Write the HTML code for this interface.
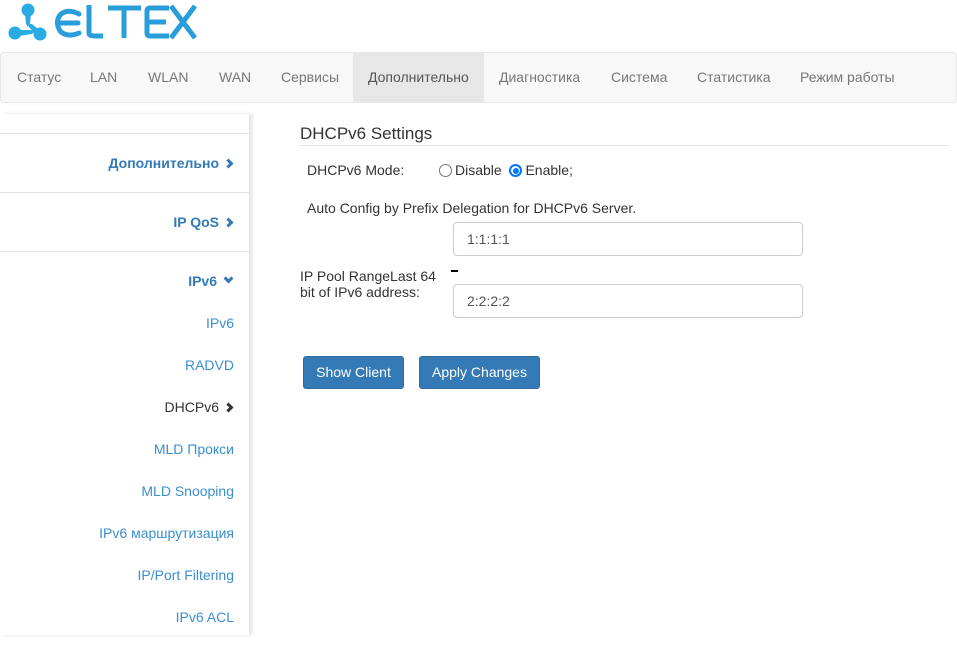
<!DOCTYPE html>
<html><head><meta charset="utf-8"><style>
*{box-sizing:border-box;margin:0;padding:0}
body{width:957px;height:651px;background:#fff;font-family:"Liberation Sans",Arial,sans-serif;font-size:14px;color:#333;position:relative;overflow:hidden}
.nav{position:absolute;left:0;top:52px;width:957px;height:51px;background:#f8f8f8;border:1px solid #e7e7e7;border-radius:4px}
.nav span{position:absolute;top:0;height:49px;line-height:49px;color:#777;font-size:14px}
.nav .act{background:#e7e7e7;color:#555;padding:0 15px}
.side{position:absolute;left:0;top:114px;width:249px;height:521px;background:#fff;box-shadow:3px 0 4px rgba(0,0,0,.12)}
.side .hd{position:absolute;right:17px;font-weight:bold;color:#337ab7;font-size:14px}
.side .ln{position:absolute;left:0;width:249px;height:1px;background:#e5e5e5}
.side .it{position:absolute;right:15px;color:#3a8fd0;font-size:14px}
.chev{display:inline-block;width:7px;height:7px;border-right:3px solid #337ab7;border-top:3px solid #337ab7;transform:rotate(45deg);margin-left:6px;position:relative;top:-1px}
.down{display:inline-block;width:7px;height:7px;border-right:3px solid #337ab7;border-bottom:3px solid #337ab7;transform:rotate(45deg);margin-left:8px;position:relative;top:-4px}
.abs{position:absolute}
.inp{position:absolute;left:453px;width:350px;height:34px;border:1px solid #ccc;border-radius:4px;color:#555;padding-left:13px;line-height:32px;font-size:14px}
.btn{position:absolute;top:356px;height:33px;background:#337ab7;border:1px solid #2e6da4;border-radius:3px;color:#fff;line-height:31px;text-align:center;font-size:14px}
.rad{display:inline-block;width:13px;height:13px;border:1px solid #767676;border-radius:50%;vertical-align:-2px;margin-right:3px;position:relative}
.rad.on{border:2px solid #0075ff}
.rad.on:after{content:"";position:absolute;left:1.5px;top:1.5px;width:6px;height:6px;border-radius:50%;background:#0075ff}
</style></head><body>
<svg class="abs" style="left:0;top:0" width="200" height="45" viewBox="0 0 200 45">
<g fill="#2aace2">
<circle cx="28" cy="10" r="6.5"/><circle cx="15" cy="33" r="6.5"/><circle cx="40" cy="34" r="6.5"/>
<path d="M25 13 L31 13 L30 24 L28 27 L26 24Z"/>
<path d="M18 30 L18 36 L32 34 L34 32 L31 30Z"/>
<path d="M38 29 L34 33 L29 27 L29 24 L32 24Z"/>
</g>
<g fill="none" stroke="#2a9ddb" stroke-width="5">
<path d="M79 14 Q67 8 60 15 Q55 22 60 31 Q67 38 79 33 M58 23 L78 23" stroke-linecap="round"/>
<path d="M89 5 L89 33 Q89 36 95 36 L103 36"/>
<path d="M108 8 L141 8 M124 8 L124 38"/>
<path d="M169 8 L150 8 Q147 8 147 11 L147 33 Q147 36 150 36 L169 36 M147 22 L166 22"/>
<path d="M171 6 L195 38 M195 6 L171 38"/>
</g>
</svg>
<div class="nav">
<span style="left:16px">Статус</span>
<span style="left:89px">LAN</span>
<span style="left:147px">WLAN</span>
<span style="left:218px">WAN</span>
<span style="left:280px">Сервисы</span>
<span class="act" style="left:352px">Дополнительно</span>
<span style="left:498px">Диагностика</span>
<span style="left:610px">Система</span>
<span style="left:696px">Статистика</span>
<span style="left:799px">Режим работы</span>
</div>
<div class="side">
<div class="ln" style="top:19px"></div>
<div class="hd" style="top:41px">Дополнительно<span class="chev"></span></div>
<div class="ln" style="top:78px"></div>
<div class="hd" style="top:100px">IP QoS<span class="chev"></span></div>
<div class="ln" style="top:137px"></div>
<div class="hd" style="top:159px">IPv6<span class="down"></span></div>
<div class="it" style="top:201px">IPv6</div>
<div class="it" style="top:243px">RADVD</div>
<div class="it" style="top:285px;right:17px;color:#333">DHCPv6<span class="chev" style="border-color:#333"></span></div>
<div class="it" style="top:327px">MLD Прокси</div>
<div class="it" style="top:369px">MLD Snooping</div>
<div class="it" style="top:411px">IPv6 маршрутизация</div>
<div class="it" style="top:453px">IP/Port Filtering</div>
<div class="it" style="top:495px">IPv6 ACL</div>
</div>
<div class="abs" style="left:300px;top:124px;font-size:17px;color:#333">DHCPv6 Settings</div>
<div class="abs" style="left:299px;top:145px;width:650px;height:1px;background:#e5e5e5"></div>
<div class="abs" style="left:307px;top:162px">DHCPv6 Mode:</div>
<div class="abs" style="left:439px;top:162px"><span class="rad"></span>Disable&nbsp;&nbsp;<span class="rad on"></span>Enable;</div>
<div class="abs" style="left:307px;top:200px">Auto Config by Prefix Delegation for DHCPv6 Server.</div>
<div class="inp" style="top:222px">1:1:1:1</div>
<div class="abs" style="left:300px;top:268px;line-height:16px">IP Pool RangeLast 64<br>bit of IPv6 address:</div>
<div class="abs" style="left:451px;top:270px;width:7px;height:2px;background:#000"></div>
<div class="inp" style="top:284px">2:2:2:2</div>
<div class="btn" style="left:303px;width:101px">Show Client</div>
<div class="btn" style="left:419px;width:121px">Apply Changes</div>
</body></html>
